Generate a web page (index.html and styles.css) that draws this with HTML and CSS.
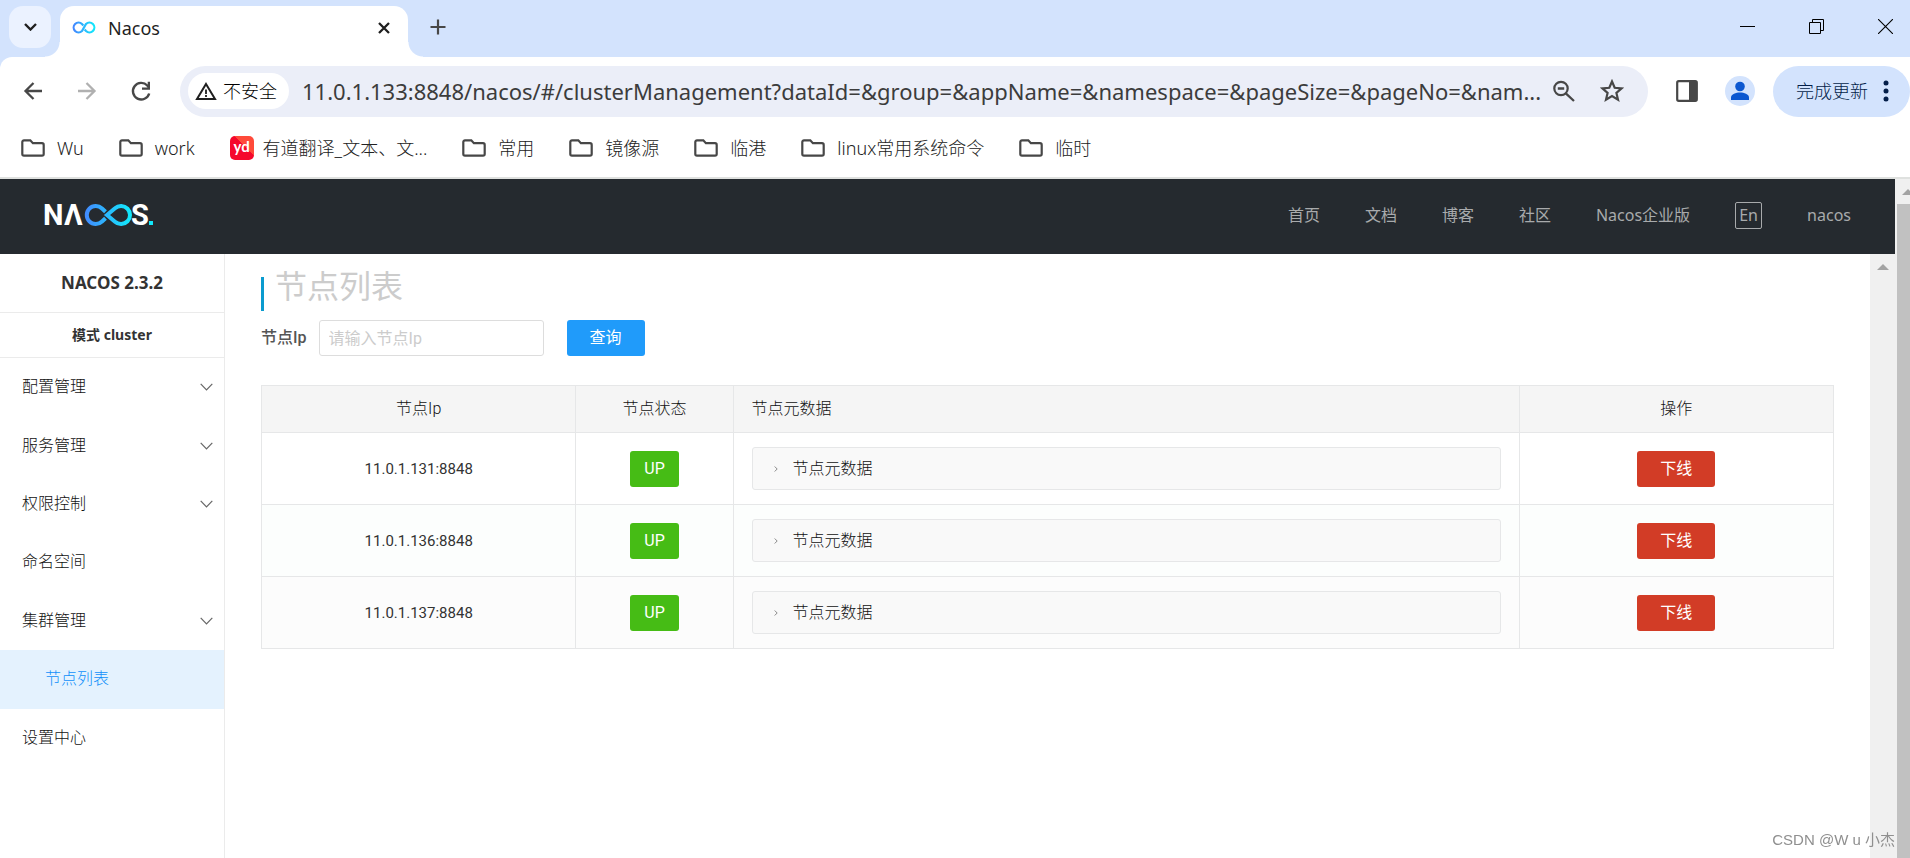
FILE: index.html
```html
<!DOCTYPE html>
<html lang="zh-CN">
<head>
<meta charset="utf-8">
<title>Nacos</title>
<link rel="stylesheet" href="styles.css">
</head>
<body>
<svg class="defs" aria-hidden="true">
  <defs>
    <linearGradient id="brand" x1="0" x2="1" y1="0" y2="0">
      <stop offset="0" stop-color="#4488ff"/>
      <stop offset="1" stop-color="#12e8fb"/>
    </linearGradient>
    <linearGradient id="brand-wide" gradientUnits="userSpaceOnUse" x1="40" x2="86" y1="0" y2="0">
      <stop offset="0" stop-color="#4488ff"/>
      <stop offset="1" stop-color="#12e8fb"/>
    </linearGradient>
    <symbol id="folder" viewBox="0 0 24 18">
      <path d="M3 1.3h6.3l2.6 2.9H21a1.7 1.7 0 0 1 1.7 1.7v9.1a1.7 1.7 0 0 1-1.7 1.7H3a1.7 1.7 0 0 1-1.7-1.7V3A1.7 1.7 0 0 1 3 1.3z" fill="none" stroke="#474747" stroke-width="2.2"/>
    </symbol>
    <symbol id="down" viewBox="0 0 13 8">
      <path d="M.7.8 6.5 6.8 12.3.8" fill="none" stroke="#666" stroke-width="1.2"/>
    </symbol>
  </defs>
</svg>
<div class="browser">
  <div class="tabs">
    <button class="tab-search" aria-label="搜索标签页"><svg width="13" height="8" viewBox="0 0 13 8"><path d="M1 1l5.500 5.500L12 1" fill="none" stroke="#1f1f1f" stroke-width="2.400"/></svg></button>
    <div class="tab">
      <svg width="24" height="13" viewBox="0 0 24 13"><path d="M11.300 4.500L10 3A4.900 4.900 0 1 0 10 10L14 3A4.900 4.900 0 1 1 14 10L12.700 8.500" fill="none" stroke="url(#brand)" stroke-width="2.200"/></svg>
      <span class="tab-title">Nacos</span>
      <button class="plain" aria-label="关闭"><svg width="12" height="12" viewBox="0 0 12 12"><path d="M1 1l10 10M11 1L1 11" stroke="#1f1f1f" stroke-width="2.300"/></svg></button>
    </div>
    <button class="plain new-tab" aria-label="新标签页"><svg width="16" height="16" viewBox="0 0 16 16"><path d="M8 .5v15M.5 8h15" stroke="#474747" stroke-width="2.200"/></svg></button>
    <div class="window-buttons">
      <button class="plain" aria-label="最小化"><svg width="15" height="15" viewBox="0 0 15 15"><path d="M0 7.500h15" stroke="#000"/></svg></button>
      <button class="plain" aria-label="还原"><svg width="15" height="15" viewBox="0 0 15 15"><path d="M.5 3.500h11v11H.5zM3.500 3.500v-3h11v11h-3" fill="none" stroke="#000"/></svg></button>
      <button class="plain" aria-label="关闭窗口"><svg width="15" height="15" viewBox="0 0 15 15"><path d="M0 0l15 15M15 0L0 15" stroke="#000" stroke-width="1.100"/></svg></button>
    </div>
  </div>
  <div class="toolbar">
    <div class="history">
      <button class="plain" aria-label="后退"><svg width="24" height="24" viewBox="0 0 24 24"><path d="M21 12H5M12.500 4L4.500 12l8 8" fill="none" stroke="#474747" stroke-width="2.300"/></svg></button>
      <button class="plain" aria-label="前进"><svg width="24" height="24" viewBox="0 0 24 24"><path d="M3 12h16M11.500 4l8 8-8 8" fill="none" stroke="#b0b0b0" stroke-width="2.300"/></svg></button>
      <button class="plain" aria-label="重新加载"><svg width="24" height="24" viewBox="0 0 24 24"><path d="M20.200 14.500A8.300 8.300 0 1 1 18.300 6.500L20 8.600" fill="none" stroke="#474747" stroke-width="2.400"/><path d="M21 2.800v8h-8v-2.300h5.700V2.800z" fill="#474747"/></svg></button>
    </div>
    <div class="omnibox">
      <button class="chip"><svg width="22" height="18" viewBox="0 0 22 18"><path d="M11 2L20 17H2z" fill="none" stroke="#1f1f1f" stroke-width="2"/><path d="M11 7.500v4.500M11 13v2" stroke="#1f1f1f" stroke-width="1.800"/></svg>不安全</button>
      <input class="url" type="text" aria-label="地址" value="11.0.1.133:8848/nacos/#/clusterManagement?dataId=&amp;group=&amp;appName=&amp;namespace=&amp;pageSize=&amp;pageNo=&amp;nam...">
      <button class="plain" aria-label="缩放"><svg width="24" height="24" viewBox="0 0 24 24"><circle cx="10" cy="9.500" r="6.700" fill="none" stroke="#474747" stroke-width="2.200"/><path d="M6.800 9.500h6.400M14.800 14.300L23 22" stroke="#474747" stroke-width="2.300"/></svg></button>
      <button class="plain" aria-label="收藏"><svg width="24" height="24" viewBox="0 0 24 24"><path d="M12 2.500l2.700 6.300 6.900.6-5.200 4.500 1.600 6.700-6-3.600-6 3.600 1.600-6.700-5.200-4.500 6.900-.6z" fill="none" stroke="#474747" stroke-width="2.200"/></svg></button>
    </div>
    <button class="plain" aria-label="侧边栏"><svg width="24" height="24" viewBox="0 0 24 24"><rect x="2.200" y="2.200" width="19.600" height="19.600" rx="1.500" fill="none" stroke="#474747" stroke-width="2.200"/><path d="M14 2h8v20h-8z" fill="#474747"/></svg></button>
    <button class="plain avatar" aria-label="用户"><svg width="20" height="20" viewBox="0 0 20 20"><circle cx="10" cy="5.500" r="4.800" fill="#0b57d0"/><path d="M1 19v-2.500C1 13 6 11.500 10 11.500s9 1.500 9 5V19z" fill="#0b57d0"/></svg></button>
    <button class="update">完成更新<svg width="6" height="22" viewBox="0 0 6 22"><g fill="#041e49"><circle cx="3" cy="3" r="2.500"/><circle cx="3" cy="11" r="2.500"/><circle cx="3" cy="19" r="2.500"/></g></svg></button>
  </div>
  <nav class="bookmarks" aria-label="书签">
    <a href="#"><svg width="24" height="18"><use href="#folder"/></svg>Wu</a>
    <a href="#"><svg width="24" height="18"><use href="#folder"/></svg>work</a>
    <a href="#" class="site"><span class="yd">yd</span>有道翻译_文本、文...</a>
    <a href="#"><svg width="24" height="18"><use href="#folder"/></svg>常用</a>
    <a href="#"><svg width="24" height="18"><use href="#folder"/></svg>镜像源</a>
    <a href="#"><svg width="24" height="18"><use href="#folder"/></svg>临港</a>
    <a href="#"><svg width="24" height="18"><use href="#folder"/></svg>linux常用系统命令</a>
    <a href="#"><svg width="24" height="18"><use href="#folder"/></svg>临时</a>
  </nav>
</div>
<div class="viewport">
  <div class="app">
    <header class="header">
      <svg class="logo" width="110" height="24" viewBox="0 0 110 24" role="img" aria-label="NACOS">
        <text x="-1" y="22" class="logo-text">N</text>
        <text x="20" y="22" class="logo-text">Λ</text>
        <path d="M61.500 8.800L58 5.500A9 9 0 1 0 58 18.500L61.500 15.200M63 12L71 5.300A9 9 0 1 1 71 18.700Z" fill="none" stroke="url(#brand-wide)" stroke-width="4"/>
        <text x="87" y="22" class="logo-text">S</text>
        <path d="M105 18h4v4h-4z" fill="#12e8fb"/>
      </svg>
      <nav class="nav" aria-label="主导航">
        <a href="#">首页</a><a href="#">文档</a><a href="#">博客</a><a href="#">社区</a><a href="#">Nacos企业版</a>
        <button class="lang">En</button>
        <a href="#">nacos</a>
      </nav>
    </header>
    <div class="body">
      <aside class="sidebar">
        <h1 class="version">NACOS 2.3.2</h1>
        <h2 class="mode">模式 cluster</h2>
        <ul class="menu">
          <li><a href="#">配置管理<svg width="13" height="8"><use href="#down"/></svg></a></li>
          <li><a href="#">服务管理<svg width="13" height="8"><use href="#down"/></svg></a></li>
          <li><a href="#">权限控制<svg width="13" height="8"><use href="#down"/></svg></a></li>
          <li><a href="#">命名空间</a></li>
          <li><a href="#">集群管理<svg width="13" height="8"><use href="#down"/></svg></a></li>
          <li><a href="#" class="active">节点列表</a></li>
          <li><a href="#">设置中心</a></li>
        </ul>
      </aside>
      <main class="main">
        <h2 class="title">节点列表</h2>
        <form class="search">
          <label for="ip">节点Ip</label>
          <input id="ip" type="text" placeholder="请输入节点Ip">
          <button type="button" class="btn primary">查询</button>
        </form>
        <table class="nodes">
          <colgroup><col class="c-ip"><col class="c-state"><col class="c-meta"><col class="c-op"></colgroup>
          <thead><tr><th>节点Ip</th><th>节点状态</th><th class="left">节点元数据</th><th>操作</th></tr></thead>
          <tbody>
            <tr><td>11.0.1.131:8848</td><td><button class="btn up">UP</button></td><td><button class="meta"><svg width="4" height="6" viewBox="0 0 4 6"><path d="M.7.5L3.200 3 .7 5.500" fill="none" stroke="#888"/></svg>节点元数据</button></td><td><button class="btn danger">下线</button></td></tr>
            <tr><td>11.0.1.136:8848</td><td><button class="btn up">UP</button></td><td><button class="meta"><svg width="4" height="6" viewBox="0 0 4 6"><path d="M.7.5L3.200 3 .7 5.500" fill="none" stroke="#888"/></svg>节点元数据</button></td><td><button class="btn danger">下线</button></td></tr>
            <tr><td>11.0.1.137:8848</td><td><button class="btn up">UP</button></td><td><button class="meta"><svg width="4" height="6" viewBox="0 0 4 6"><path d="M.7.5L3.200 3 .7 5.500" fill="none" stroke="#888"/></svg>节点元数据</button></td><td><button class="btn danger">下线</button></td></tr>
          </tbody>
        </table>
      </main>
      <div class="scroll inner"><svg width="12" height="6" viewBox="0 0 12 6"><path d="M6 0l6 6H0z" fill="#a3a3a3"/></svg></div>
    </div>
  </div>
  <div class="scroll outer"><svg width="12" height="6" viewBox="0 0 12 6"><path d="M6 0l6 6H0z" fill="#a3a3a3"/></svg><div class="thumb"></div></div>
</div>
<div class="watermark">CSDN @W u 小杰</div>
</body>
</html>
```
FILE: styles.css
```css
* { box-sizing: border-box; }
body {
  margin: 0;
  height: 100vh;
  display: flex;
  flex-direction: column;
  overflow: hidden;
  background: #fff;
  color: #333;
  font: 16px/24px Roboto, "Noto Sans CJK SC", sans-serif;
}
button, input { font: inherit; color: inherit; }
a { color: inherit; text-decoration: none; }
svg { display: block; flex: none; }
.defs { position: absolute; width: 0; height: 0; }
.plain { border: 0; padding: 0; background: none; flex: none; }

/* Browser frame */
.browser {
  flex: none;
  background: #d3e3fd;
  border-bottom: 2px solid #dfe1df;
  font: 18px/24px "Noto Sans", "Noto Sans CJK SC", sans-serif;
}
.tabs {
  height: 57px;
  padding: 6px 17px 0 9px;
  display: flex;
  align-items: flex-start;
}
.tab-search {
  width: 42px;
  height: 42px;
  margin-right: 9px;
  padding: 0;
  display: flex;
  align-items: center;
  justify-content: center;
  border: 0;
  border-radius: 14px;
  background: #ebf2ff;
}
.tab {
  position: relative;
  width: 348px;
  height: 51px;
  padding: 0 18px 8px 12px;
  display: flex;
  align-items: center;
  gap: 12px;
  border-radius: 14px 14px 0 0;
  background: #fff;
}
.tab::before, .tab::after {
  content: "";
  position: absolute;
  bottom: 0;
  width: 15px;
  height: 15px;
}
.tab::before { left: -15px; background: radial-gradient(circle at 0 0, transparent 14px, #fff 15px); }
.tab::after { right: -15px; background: radial-gradient(circle at 100% 0, transparent 14px, #fff 15px); }
.tab-title { flex: 1; color: #1f1f1f; }
.new-tab { margin: 13px 0 0 22px; }
.window-buttons { margin: 13px 0 0 auto; display: flex; gap: 54px; }
.toolbar {
  height: 68px;
  display: flex;
  align-items: center;
  padding-left: 21px;
  background: #fff;
  border-top-left-radius: 12px;
}
.history { display: flex; gap: 30px; margin-right: 27px; }
.omnibox {
  flex: 1;
  min-width: 0;
  height: 51px;
  margin-right: 27px;
  padding: 0 24px 0 8px;
  display: flex;
  align-items: center;
  border-radius: 26px;
  background: #ebeef8;
}
.omnibox .plain + .plain { margin-left: 25px; }
.chip {
  flex: none;
  height: 36px;
  padding: 0 12px 0 7px;
  display: flex;
  align-items: center;
  gap: 6px;
  border: 0;
  border-radius: 18px;
  background: #fff;
  color: #000;
  font-weight: 300;
}
.url {
  flex: 1;
  min-width: 0;
  margin: 0 8px 0 13px;
  padding: 0;
  border: 0;
  outline: 0;
  background: none;
  color: #3c3c3c;
  font-size: 22px;
  line-height: 30px;
}
.avatar {
  width: 30px;
  height: 30px;
  margin: 0 18px 0 26px;
  display: flex;
  align-items: center;
  justify-content: center;
  border-radius: 50%;
  background: #d3e3fd;
}
.update {
  height: 51px;
  padding: 0 21px 0 23px;
  display: flex;
  align-items: center;
  gap: 15px;
  border: 0;
  border-radius: 26px;
  background: #d3e3fd;
  color: #041e49;
  font-weight: 300;
}
.bookmarks {
  height: 52px;
  padding: 0 0 6px 21px;
  display: flex;
  align-items: center;
  gap: 35px;
  background: #fff;
  color: #222;
  font-weight: 300;
}
.bookmarks a { display: flex; align-items: center; gap: 12px; white-space: nowrap; }
.bookmarks .site { gap: 9px; }
.yd {
  width: 24px;
  height: 24px;
  border-radius: 5px;
  background: linear-gradient(225deg, #ff4a3a 40%, #f5082c 41%);
  color: #fff;
  font: bold 15px/21px Lato, sans-serif;
  text-align: center;
}

/* Console */
.viewport { flex: 1; min-height: 0; display: flex; }
.app { flex: 1; min-width: 0; display: flex; flex-direction: column; }
.header {
  height: 75px;
  flex: none;
  padding: 0 44px 3px;
  display: flex;
  align-items: center;
  justify-content: space-between;
  background: #252a2f;
}
.logo { overflow: visible; }
.logo-text { font: 700 29px Roboto, sans-serif; fill: #fff; }
.nav {
  display: flex;
  align-items: center;
  gap: 45px;
  color: #a8aaac;
  font-family: "Noto Sans", "Noto Sans CJK SC", sans-serif;
}
.lang {
  width: 27px;
  height: 27px;
  padding: 0;
  border: 1px solid #a8aaac;
  border-radius: 2px;
  background: none;
  line-height: 22px;
}
.body { flex: 1; min-height: 0; display: flex; }
.sidebar { width: 225px; flex: none; border-right: 1px solid #ebebeb; }
.version, .mode {
  margin: 0;
  border-bottom: 1px solid #ebebeb;
  text-align: center;
  font-family: "Noto Sans", "Noto Sans CJK SC", sans-serif;
  font-weight: 700;
}
.version { font-size: 17px; line-height: 58px; }
.mode { font-size: 14px; line-height: 44px; }
.menu {
  margin: 0;
  padding: 0;
  min-height: 409px;
  display: flex;
  flex-direction: column;
  list-style: none;
  color: #111;
  font-weight: 300;
}
.menu li { flex: 1; display: flex; }
.menu a {
  flex: 1;
  padding: 0 11px 0 22px;
  display: flex;
  align-items: center;
  justify-content: space-between;
}
.menu .active { padding-left: 45px; background: #e4f2fe; color: #1090fa; }
.main { flex: 1; min-width: 0; padding: 16px 36px 0; }
.title {
  margin: 0 0 9px;
  padding-left: 14px;
  height: 41px;
  background: linear-gradient(#0a9bcf, #0a9bcf) 0 100% / 3px 34px no-repeat;
  color: #ccc;
  font-size: 32px;
  font-weight: 400;
  line-height: 34px;
}
.search { display: flex; align-items: center; margin-bottom: 29px; }
.search label { font-weight: 500; color: #555; }
.search input {
  width: 225px;
  height: 36px;
  margin: 0 23px 0 12px;
  padding: 0 9px;
  border: 1px solid #ddd;
  border-radius: 3px;
}
.search input::placeholder { color: #ccc; }
.btn { height: 36px; padding: 0 23px; border: 0; border-radius: 3px; color: #fff; line-height: 34px; }
.primary { background: #209bfa; }
.up { padding: 0 14px; background: #46bc15; }
.danger { background: #d23c26; }
.nodes {
  width: 100%;
  table-layout: fixed;
  border-collapse: collapse;
}
.c-ip, .c-op { width: 20%; }
.c-state { width: 10%; }
.c-meta { width: 50%; }
.nodes th, .nodes td { border: 1px solid #e6e7e8; text-align: center; }
.nodes th { height: 47px; padding: 0 18px; background: #f5f5f5; color: #111; font-weight: 300; }
.nodes .left { text-align: left; }
.nodes td { height: 72px; padding: 0 18px; font-size: 15px; }
.nodes td button { font-size: 16px; }
.nodes td .btn { display: block; margin: 0 auto; }
.nodes tbody tr:nth-child(2) td { background: #fcfefd; }
.nodes tbody tr:nth-child(3) td { background: #fcfcfc; }
.nodes .meta {
  width: 100%;
  height: 43px;
  padding: 0 21px;
  display: flex;
  align-items: center;
  gap: 15px;
  border: 1px solid #e6e7e8;
  border-radius: 3px;
  background: #f9f9f9;
  color: #111;
  font-weight: 300;
}
.scroll { flex: none; background: #f0f0f0; }
.inner { width: 25px; padding: 10px 0 0 7px; }
.outer { width: 15px; padding: 10px 0 0 2px; display: flex; flex-direction: column; overflow: hidden; }
.outer svg { margin-left: 5px; }
.thumb { flex: 1; margin-top: 9px; background: #c1c1c1; }
.watermark {
  position: fixed;
  right: 15px;
  bottom: 6px;
  color: #8f8f8f;
  font: 15px/24px "Liberation Sans", "Noto Sans CJK SC", sans-serif;
}
```
